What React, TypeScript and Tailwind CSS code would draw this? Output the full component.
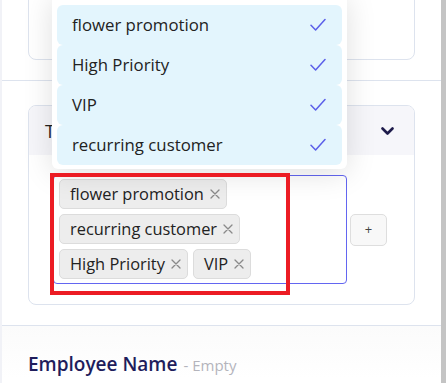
import React from "react";

const Check = () => (
  <svg width="16" height="14" viewBox="0 0 16 14" fill="none">
    <path d="M1 7.2 L5.6 12 L15 1.5" stroke="#5b5fe9" strokeWidth="1.5" strokeLinecap="round" strokeLinejoin="round" />
  </svg>
);

const X = () => (
  <svg width="10" height="10" viewBox="0 0 10 10" fill="none">
    <path d="M1 1 L9 9 M9 1 L1 9" stroke="#8a8a8a" strokeWidth="1.3" strokeLinecap="round" />
  </svg>
);

const Tag = ({ label }: { label: string }) => (
  <div className="h-[30px] flex items-center gap-[6px] pl-[10px] pr-[6px] border border-[#dcdcdc] bg-[#ededed] rounded-[5px] text-[16.4px] text-[#222]">
    <span>{label}</span>
    <X />
  </div>
);

const items = ["flower promotion", "High Priority", "VIP", "recurring customer"];

export default function App() {
  return (
    <div className="w-[446px] h-[383px] relative overflow-hidden bg-white flex font-['Open_Sans','Noto_Sans',sans-serif]">
      <div className="w-[2px] bg-[#f1f2f7]" />
      <div className="flex-1 flex flex-col">
        <div className="px-[26px] pb-[20px] border-b border-[#dde3ee]">
          <div className="h-[100px] mt-[-40px] border border-[#dde3ee] rounded-lg" />
        </div>
        <div className="px-[26px] pt-[24px] pb-[20px] border-b border-[#dde3ee]">
          <div className="h-[200px] border border-[#dde3ee] rounded-lg overflow-hidden">
            <div className="h-[49px] bg-[#f6f6fa] flex items-center justify-between pl-[16px] pr-[20px] pt-[2px]">
              <span className="text-[18px] text-[#222]">Tags</span>
              <svg width="13" height="9" viewBox="0 0 13 9" fill="none">
                <path d="M1.5 1.5 L6.5 6.5 L11.5 1.5" stroke="#1e1b4b" strokeWidth="2.6" strokeLinecap="round" strokeLinejoin="round" />
              </svg>
            </div>
            <div className="pl-[24px] pt-[20px] flex items-center gap-[3px]">
              <div className="w-[294px] h-[109px] border border-[#6366f1] rounded-[4px] pl-[5px] pt-[3px] flex flex-wrap content-start gap-[5px]">
                <Tag label="flower promotion" />
                <Tag label="recurring customer" />
                <Tag label="High Priority" />
                <Tag label="VIP" />
              </div>
              <div className="w-[37px] h-[32px] border border-[#dedede] bg-[#f8f8f8] rounded-[5px] flex items-center justify-center text-[13px] text-[#444]">
                +
              </div>
            </div>
          </div>
        </div>
        <div className="px-[26px] pt-[24px] flex items-baseline gap-[6px] bg-gradient-to-b from-[#fbfbfb] to-white">
          <span className="text-[19px] font-semibold text-[#1f1d5c]">Employee Name</span>
          <span className="text-[15px] text-[#b4b4bc]">- Empty</span>
        </div>
      </div>
      <div className="w-[5px] bg-[#c4c4c4]" />

      <div className="absolute left-[52px] top-[-6px] w-[295px] pt-[11px] pb-[4px] px-[5px] bg-white rounded-md shadow-[0_4px_30px_rgba(0,0,0,0.13)]">
        {items.map((t) => (
          <div key={t} className="h-[40px] flex items-center justify-between pl-[15px] pr-[16px] bg-[#e3f5fd] rounded-md text-[16.8px] text-[#222]">
            <span>{t}</span>
            <Check />
          </div>
        ))}
      </div>

      <div className="absolute left-[50px] top-[173px] w-[240px] h-[122px] border-4 border-[#ec1c24]" />
    </div>
  );
}
